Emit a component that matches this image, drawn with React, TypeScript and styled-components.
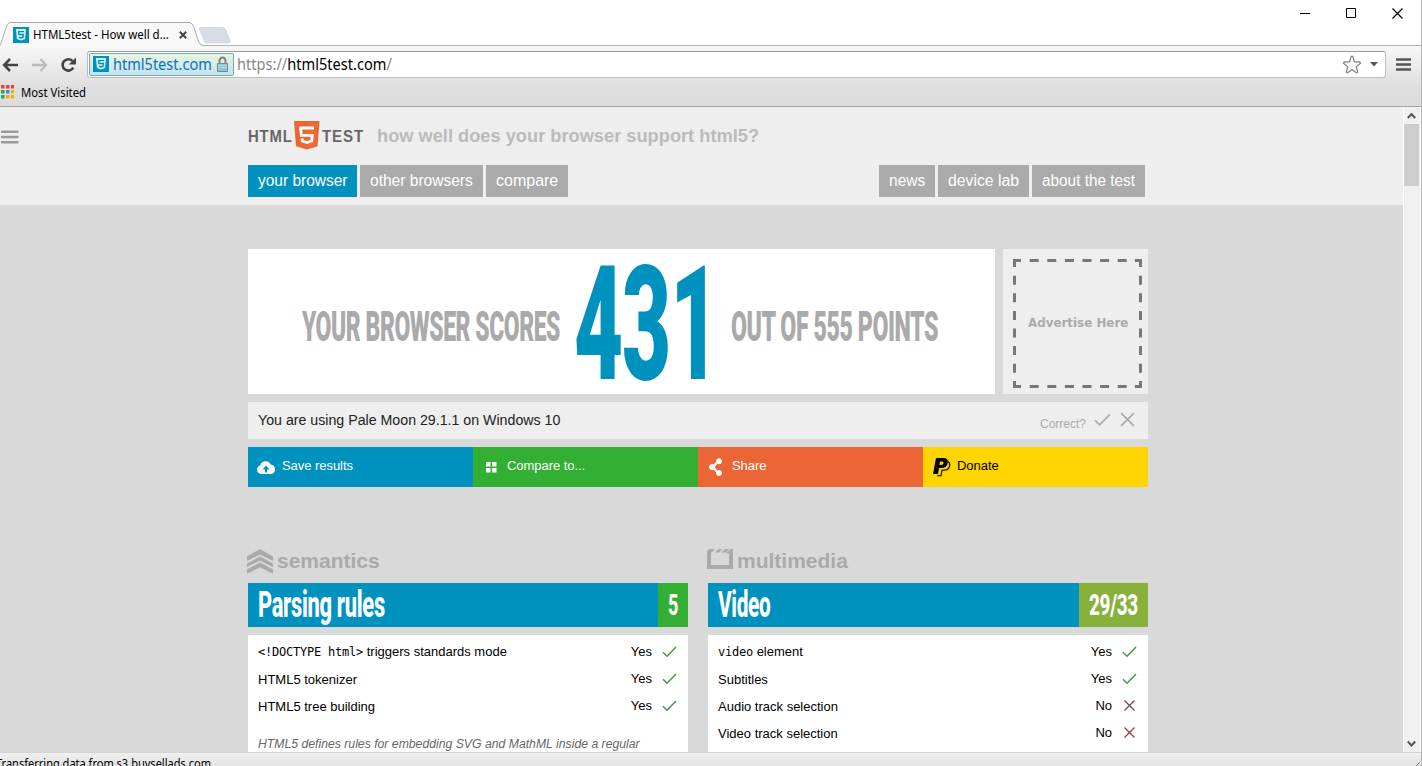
import React, { useLayoutEffect, useRef, useState } from "react";
import styled, { createGlobalStyle } from "styled-components";

const BLUE = "#0092bf";
const UI = '"Noto Sans", "Open Sans", sans-serif';
const SANS = '"Liberation Sans", Arial, sans-serif';
const DISPLAY = 'Roboto, "Liberation Sans", sans-serif';

const GlobalStyle = createGlobalStyle`
  * { box-sizing: border-box; }
  body { margin: 0; background: #fff; overflow: hidden; }
  svg { display: block; flex: none; }
`;

const FitBox = styled.span<{ $w: number }>`
  display: block;
  flex: none;
  width: ${(p) => p.$w}px;
  white-space: pre;
`;
const FitInner = styled.span`
  display: inline-block;
  transform-origin: 0 0;
`;

/* Squeezes a line of text horizontally until it fills the given width. */
function Fit({ w, children, className }: { w: number; children: React.ReactNode; className?: string }) {
  const ref = useRef<HTMLSpanElement>(null);
  const [scale, setScale] = useState(1);
  useLayoutEffect(() => {
    if (ref.current) setScale(w / ref.current.offsetWidth);
  }, [w]);
  return (
    <FitBox $w={w} className={className}>
      <FitInner ref={ref} style={{ transform: `scaleX(${scale})` }}>{children}</FitInner>
    </FitBox>
  );
}

/* ---------- window ---------- */
const Window = styled.div`
  width: 1422px;
  height: 766px;
  display: flex;
  flex-direction: column;
  overflow: hidden;
  font-family: ${SANS};
  border-right: 1px solid #b4b4b4;
  background: #fff;
`;
const TitleBar = styled.div`
  height: 46px;
  flex: none;
  display: flex;
  justify-content: space-between;
  border-bottom: 1px solid #b4b4b4;
`;
const Tabs = styled.div`
  position: relative;
  display: flex;
  width: 240px;
  height: 47px;
  padding: 22px 0 0 13px;
`;
const TabShape = styled.svg`
  position: absolute;
  left: 0;
  top: 22px;
`;
const TabContent = styled.div`
  position: relative;
  display: flex;
  align-items: center;
  height: 25px;
  font: 12px/25px ${UI};
  color: #000;
`;
const TabLabel = styled(Fit)`
  margin: 0 10px 0 4px;
`;
const Controls = styled.div`
  display: flex;
  align-items: center;
  gap: 35px;
  height: 26px;
  padding-right: 18px;
`;
const Toolbar = styled.div`
  height: 60px;
  flex: none;
  background: linear-gradient(#f7f7f7, #dedede 70%, #dcdcdc);
`;
const NavRow = styled.div`
  display: flex;
  align-items: center;
  height: 33px;
  padding: 4px 10px 0 2px;
`;
const NavIcons = styled.div`
  display: flex;
  align-items: center;
  gap: 12.5px;
  width: 85px;
`;
const AddressBar = styled.div`
  display: flex;
  align-items: center;
  width: 1299px;
  height: 27px;
  padding: 0 7px 0 1px;
  border: 1px solid #bdbdbd;
  border-top-color: #999;
  border-radius: 3px;
  background: #fff;
  font: 16px/23px ${UI};
`;
const Identity = styled.div`
  display: flex;
  align-items: center;
  width: 145px;
  height: 23px;
  padding-left: 3px;
  gap: 4px;
  border: 1px solid #72acba;
  border-radius: 2px;
  background: linear-gradient(#e6f4dc, #c3e4f1);
  color: #0f6fc0;
  > svg:first-child { margin-bottom: 2px; }
`;
const Url = styled.div`
  display: flex;
  flex: 1;
  margin-left: 3px;
  color: #888;
  b { font-weight: 400; color: #000; }
`;
const UrlIcons = styled.div`
  display: flex;
  align-items: center;
  gap: 8px;
`;
const MenuButton = styled.svg`
  margin-left: 10px;
`;
const Bookmarks = styled.div`
  display: flex;
  align-items: center;
  gap: 7px;
  height: 26px;
  font: 12px/26px ${UI};
`;
const BookmarkLabel = styled(Fit)`
  margin-top: 2px;
`;
const Viewport = styled.div`
  display: flex;
  flex: none;
  height: 646px;
  border-top: 1px solid #a5a5a5;
  overflow: hidden;
`;
const Page = styled.div`
  width: 1403px;
  height: 645px;
  background: #d9d9d9;
  overflow: hidden;
`;
const ScrollBar = styled.div`
  display: flex;
  flex-direction: column;
  align-items: center;
  width: 17px;
  padding: 6px 1px 5px 0;
  border-left: 1px solid #fff;
  background: #f0f0f0;
`;
const Thumb = styled.div`
  width: 15px;
  height: 62px;
  margin-top: 4px;
  margin-bottom: auto;
  background: #cdcdcd;
`;
const StatusBar = styled.div`
  display: flex;
  justify-content: space-between;
  height: 14px;
  flex: none;
  border-top: 1px solid #d4d4d4;
  background: linear-gradient(#f0f0f0, #e3e3e3);
  font: 12px/22px ${UI};
  overflow: hidden;
`;
const StatusText = styled(Fit)`
  margin-left: -4px;
`;
const Grip = styled.svg`
  margin-right: 1px;
`;

/* ---------- page header ---------- */
const Header = styled.header`
  display: flex;
  height: 98px;
  background: #eee;
`;
const Burger = styled.div`
  width: 248px;
  padding: 23px 0 0 1px;
`;
const HeaderMain = styled.div`
  width: 897px;
`;
const Brand = styled.div`
  display: flex;
  align-items: center;
  height: 58px;
`;
const Logo = styled.div`
  display: flex;
  align-items: center;
  width: 129px;
  font-size: 16.5px;
  font-weight: 700;
  color: #666;
  letter-spacing: 1px;
  svg { margin: 0 1px 2px 0; }
`;
const Slogan = styled.div`
  font-size: 18px;
  font-weight: 700;
  color: #bbb;
`;
const Nav = styled.nav`
  display: flex;
  gap: 3px;
`;
const NavItem = styled.a<{ $active?: boolean; $push?: boolean }>`
  height: 32px;
  padding: 0 10px;
  margin-left: ${(p) => (p.$push ? "auto" : "0")};
  background: ${(p) => (p.$active ? BLUE : "#aaa")};
  color: #fff;
  font-size: 16px;
  line-height: 32px;
`;

/* ---------- results ---------- */
const Content = styled.main`
  width: 900px;
  margin: 44px 0 0 248px;
`;
const TopRow = styled.div`
  display: flex;
  gap: 8px;
  height: 145px;
`;
const Banner = styled.div`
  display: flex;
  width: 747px;
  padding-left: 54px;
  background: #fff;
  color: #aaa;
  font-family: ${DISPLAY};
  font-weight: 900;
  font-size: 42px;
  line-height: 156px;
  letter-spacing: -0.8px;
`;
const BigScore = styled(Fit)`
  margin: 0 13px 0 14px;
  color: ${BLUE};
  font-size: 159px;
  line-height: 152px;
  letter-spacing: -2px;
`;
const Advert = styled.div`
  width: 145px;
  padding: 10px 6px 6px 10px;
  background: #eee;
`;
const AdvertFrame = styled.div`
  position: relative;
  width: 129px;
  height: 129px;
  display: flex;
  align-items: center;
  justify-content: center;
  padding-bottom: 2px;
  color: #aaa;
  font: 700 12px "DejaVu Sans", sans-serif;
  > svg { position: absolute; inset: 0; }
`;
const Agent = styled.div`
  display: flex;
  justify-content: space-between;
  height: 37px;
  margin: 8px 0;
  padding: 0 12px 0 10px;
  background: #eee;
  color: #222;
  font-size: 14px;
  line-height: 37px;
`;
const Feedback = styled.div`
  display: flex;
  color: #aaa;
  font-size: 12px;
  line-height: 44px;
  svg { margin: 9px 0 0 8px; }
`;
const Actions = styled.div`
  display: grid;
  grid-template-columns: repeat(4, 225px);
`;
const Action = styled.a<{ $bg: string; $fg?: string }>`
  display: flex;
  height: 40px;
  padding-left: 9px;
  background: ${(p) => p.$bg};
  color: ${(p) => p.$fg ?? "#fff"};
  font-size: 13px;
  line-height: 38px;
  letter-spacing: -0.05px;
  svg { margin: 11px 5px 0 0; }
`;
const Columns = styled.div`
  display: grid;
  grid-template-columns: 440px 440px;
  gap: 20px;
  margin-top: 59px;
`;
const Category = styled.h2`
  display: flex;
  height: 29px;
  margin: 0 0 8px -1px;
  gap: 4px;
  color: #aaa;
  font-size: 21px;
  line-height: 30px;
`;
const CardHead = styled.div`
  display: flex;
  justify-content: space-between;
  height: 44px;
  padding-left: 10px;
  background: ${BLUE};
  color: #fff;
  font-family: ${DISPLAY};
  font-size: 36px;
  font-weight: 800;
  line-height: 44px;
  letter-spacing: -0.5px;
`;
const Points = styled.div<{ $bg: string }>`
  padding: 0 10px;
  background: ${(p) => p.$bg};
  font-size: 29px;
`;
const Card = styled.div`
  height: 160px;
  margin-top: 8px;
  padding: 4px 10px;
  background: #fff;
`;
const Row = styled.div`
  display: flex;
  height: 27px;
  color: #000;
  font-size: 13px;
  line-height: 27px;
  white-space: pre;
  svg { margin: 5px 1px 0 10px; }
  &:first-child { line-height: 25px; }
`;
const RowLabel = styled.div`
  flex: 1;
  code { font: 12px/24px "DejaVu Sans Mono", monospace; letter-spacing: -0.22px; }
`;
const RowStatus = styled.div`
  line-height: 25px;
`;
const Note = styled.p`
  margin: 15px 0 0;
  color: #666;
  font-size: 12px;
  font-style: italic;
  line-height: 18px;
`;

/* ---------- drawings ---------- */
const Favicon = () => (
  <svg width="16" height="16" viewBox="0 0 16 16">
    <path fill={BLUE} d="M0 0h16v16H0z" />
    <path fill="#d5f0fa" d="M3 2h10l-.9 10L8 13.5 3.900 12z" />
    <path fill="none" stroke={BLUE} strokeWidth="1.400" d="M11 4.600H5.700L6 7.500h4.300L10 10.200l-2 .7-2-.7" />
  </svg>
);
const Shield = () => (
  <svg width="28" height="30" viewBox="0 0 28 30">
    <path fill="#eb6434" d="M1 1h25.500l-2 25.200L14 29.500 3 26.200z" />
    <path fill="#f06a35" d="M14 3h10.700l-2 21.500L14 27z" />
    <path fill="none" stroke="#fff" strokeWidth="2.800" d="M21 8H7.700l.6 7.300h11L18.700 21 14 22.500 9.300 21 9 18.300" />
  </svg>
);
const Check = ({ size = 15, color = "#3f9440", w = 1.400 }) => (
  <svg width={size} height={size} viewBox="0 0 15 15" fill="none" stroke={color} strokeWidth={w}>
    <path d="M1 8.200l4 4L14 3" />
  </svg>
);
const Cross = ({ size = 15, color = "#8c4048", w = 1.300, s = 2.500 }) => (
  <svg width={size} height={size} viewBox="0 0 15 15" stroke={color} strokeWidth={w}>
    <path d={`M${s} ${s}L${15 - s} ${15 - s}M${15 - s} ${s}L${s} ${15 - s}`} />
  </svg>
);
const dots = ["#ea4335", "#ea4335", "#ea4335", "#34a060", "#4285f4", "#fbaa00", "#34a060", "#fbaa00", "#fbaa00"];

type Result = { label: React.ReactNode; ok: boolean };
const ResultRow = ({ label, ok }: Result) => (
  <Row>
    <RowLabel>{label}</RowLabel>
    <RowStatus>{ok ? "Yes" : "No"}</RowStatus>
    {ok ? <Check /> : <Cross />}
  </Row>
);
const parsing: Result[] = [
  { label: <><code>{"<!DOCTYPE html>"}</code> triggers standards mode</>, ok: true },
  { label: "HTML5 tokenizer", ok: true },
  { label: "HTML5 tree building", ok: true },
];
const video: Result[] = [
  { label: <><code>video</code> element</>, ok: true },
  { label: "Subtitles", ok: true },
  { label: "Audio track selection", ok: false },
  { label: "Video track selection", ok: false },
];

export default function App() {
  return (
    <Window>
      <GlobalStyle />
      <TitleBar>
        <Tabs>
          <TabShape width="240" height="26" viewBox="0 0 240 26">
            <path fill="#f8f8f8" stroke="#aaa" d="M-2 26C3 22 5 1 10 .5H190C196 1 196 23.500 203 23.500V26H-1z" />
            <path fill="#f8f8f8" d="M0 24h204v2H0z" />
            <path fill="#d8dde5" stroke="#ccd0d6" strokeWidth=".7" d="M200 5.500h22q3 0 4 3l4 10q1 2.500-2 2.500h-21q-2 0-3-2.500l-4.500-11q-1-2 .5-2z" />
          </TabShape>
          <TabContent>
            <Favicon />
            <TabLabel w={136}>HTML5test - How well d...</TabLabel>
            <svg width="8" height="8" viewBox="0 0 8 8" stroke="#444" strokeWidth="2"><path d="M.8.8l6.400 6.400M7.200.8L.8 7.200" /></svg>
          </TabContent>
        </Tabs>
        <Controls>
          <svg width="11" height="11"><path d="M0 5h10v1H0z" /></svg>
          <svg width="11" height="11" fill="none" stroke="#000"><path d="M.5.5h9v9h-9z" /></svg>
          <svg width="11" height="11" stroke="#000" strokeWidth="1.200"><path d="M.5.5l10 10M10.500.5l-10 10" /></svg>
        </Controls>
      </TitleBar>
      <Toolbar>
        <NavRow>
          <NavIcons>
            <svg width="17" height="14" viewBox="0 0 17 14" fill="none" stroke="#444" strokeWidth="2.600"><path d="M2 7h14M8 1L2.200 7 8 13" /></svg>
            <svg width="16" height="14" viewBox="0 0 16 14" fill="none" stroke="#bbb" strokeWidth="2.300"><path d="M0 7h14M8.500 1l5.500 6-5.500 6" /></svg>
            <svg width="17" height="16" viewBox="0 0 17 16" fill="none" stroke="#444" strokeWidth="2.600"><path d="M12.500 4A5.700 5.700 0 1 0 13.300 10.700" /><path fill="#444" stroke="none" d="M16 .5v7H8.800z" /></svg>
          </NavIcons>
          <AddressBar>
            <Identity>
              <Favicon />
              <Fit w={99}>html5test.com</Fit>
              <svg width="13" height="17" viewBox="0 0 13 17">
                <path fill="none" stroke="#858585" strokeWidth="2" d="M3.500 8V5a3 3.500 0 0 1 6 0v3" />
                <path fill="#8dc5d5" stroke="#7b898d" d="M1.500 7.500h10v8h-10z" />
                <path stroke="#b9dfe7" d="M2 9.500h9M2 11.500h9" />
              </svg>
            </Identity>
            <Url><Fit w={155}>https://<b>html5test.com</b>/</Fit></Url>
            <UrlIcons>
              <svg width="20" height="19" viewBox="0 0 20 19" fill="#fff" stroke="#888" strokeWidth="1.300" strokeLinejoin="round"><path d="M10 1.200q.8 0 1 .9l1.400 4.700 5.400.2q1.300.4.400 1.400l-4 3.400 1.500 5q-.2 1.400-1.500.7L10 14.700l-4.200 2.800q-1.300.7-1.500-.7l1.500-5-4-3.400Q.9 7.400 2.200 7l5.400-.2L9 2.100q.2-.9 1-.9z" /></svg>
              <svg width="8" height="5"><path fill="#555" d="M0 0h8L4 4.500z" /></svg>
            </UrlIcons>
          </AddressBar>
          <MenuButton width="15" height="13" viewBox="0 0 15 13" stroke="#555" strokeWidth="2.600"><path d="M0 1.500h15M0 6.500h15M0 11.500h15" /></MenuButton>
        </NavRow>
        <Bookmarks>
          <svg width="14" height="14">
            {dots.map((c, i) => <rect key={i} x={1 + (i % 3) * 5} y={(i / 3 | 0) * 5} width="3.500" height="3.500" fill={c} />)}
          </svg>
          <BookmarkLabel w={65}>Most Visited</BookmarkLabel>
        </Bookmarks>
      </Toolbar>

      <Viewport>
        <Page>
          <Header>
            <Burger>
              <svg width="18" height="14" stroke="#999" strokeWidth="2.400"><path d="M0 1.700h17.500M0 7h17.500M0 12.300h17.500" /></svg>
            </Burger>
            <HeaderMain>
              <Brand>
                <Logo>
                  <Fit w={45}>HTML</Fit>
                  <Shield />
                  <Fit w={42}>TEST</Fit>
                </Logo>
                <Slogan><Fit w={382}>how well does your browser support html5?</Fit></Slogan>
              </Brand>
              <Nav>
                <NavItem $active><Fit w={89}>your browser</Fit></NavItem>
                <NavItem><Fit w={103}>other browsers</Fit></NavItem>
                <NavItem><Fit w={62}>compare</Fit></NavItem>
                <NavItem $push><Fit w={36}>news</Fit></NavItem>
                <NavItem><Fit w={71}>device lab</Fit></NavItem>
                <NavItem><Fit w={93}>about the test</Fit></NavItem>
              </Nav>
            </HeaderMain>
          </Header>

          <Content>
            <TopRow>
              <Banner>
                <Fit w={258}>YOUR BROWSER SCORES</Fit>
                <BigScore w={144}>431</BigScore>
                <Fit w={207}>OUT OF 555 POINTS</Fit>
              </Banner>
              <Advert>
                <AdvertFrame>
                  <svg width="129" height="129" fill="none" stroke="#777" strokeWidth="3">
                    <path strokeDasharray="8 8.700 9 8.600 9 8.600 9 8.600 9 8.600 9 8.600 9 8.200 8" d="M0 1.500h129M0 127.500h129M1.500 0v129M127.500 0v129" />
                  </svg>
                  <Fit w={100}>Advertise Here</Fit>
                </AdvertFrame>
              </Advert>
            </TopRow>
            <Agent>
              <Fit w={302}>You are using Pale Moon 29.1.1 on Windows 10</Fit>
              <Feedback>
                Correct?
                <Check size={17} color="#aaa" w={1.500} />
                <Cross size={17} color="#aaa" w={1.500} s={1.800} />
              </Feedback>
            </Agent>
            <Actions>
              <Action $bg={BLUE}>
                <svg width="20" height="18" viewBox="1 0 20 18">
                  <path fill="#fff" d="M5 16a4.400 4.400 0 0 1-.8-8.600A5.500 5.500 0 0 1 14.600 6.500 4.800 4.800 0 0 1 15 16z" />
                  <path fill={BLUE} d="M9 14.500v-3H6.500l3.500-4 3.500 4H11v3z" />
                </svg>
                Save results
              </Action>
              <Action $bg="#33b033">
                <svg width="20" height="18" fill="#fff"><path d="M4 4h4.500v4.500H4zM10 4h4.500v4.500H10zM4 10h4.500v4.500H4zM10 10h4.500v4.500H10z" /></svg>
                Compare to...
              </Action>
              <Action $bg="#eb6536">
                <svg width="20" height="18" viewBox="0 0 20 18" fill="#fff" stroke="#fff">
                  <path fill="none" strokeWidth="2.200" d="M11.500 3.500Q9 5 6 9q3 4 5.500 6" />
                  <circle cx="12" cy="3.300" r="2.500" /><circle cx="5" cy="9" r="2.500" /><circle cx="12" cy="15" r="2.500" />
                </svg>
                Share
              </Action>
              <Action $bg="#fed500" $fg="#000">
                <svg width="20" height="20" viewBox="0 0 20 20">
                  <path fill="none" stroke="#1e1e0b" strokeWidth="1.300" d="M16 3.500q2.400 1.500 1.400 5Q16.500 12 12.500 12.200l-2.500.2-1 5.300H5.300" />
                  <path fillRule="evenodd" d="M4 0h7.500q5 0 4.300 4.500Q15 10 9 10H7l-1 6H1zM8 3.500L7.400 7H9q2.500 0 2.600-2 .2-1.500-1.500-1.500z" />
                </svg>
                Donate
              </Action>
            </Actions>

            <Columns>
              <section>
                <Category>
                  <svg width="26" height="29" viewBox="0 0 26 29" fill="#aaa">
                    <path d="M0 10.500L13 3l13 7.500v4.600L13 8.500 0 15.100zM0 17.500l13-7 13 7v3.600l-13-6.500-13 6.500zM0 23.600l13-7 13 7v4.200l-13-6.600-13 6.600z" />
                  </svg>
                  <Fit w={103}>semantics</Fit>
                </Category>
                <CardHead>
                  <Fit w={127}>Parsing rules</Fit>
                  <Points $bg="#33b033"><Fit w={10}>5</Fit></Points>
                </CardHead>
                <Card>
                  {parsing.map((r, i) => <ResultRow key={i} {...r} />)}
                  <Note><Fit w={382}>HTML5 defines rules for embedding SVG and MathML inside a regular</Fit></Note>
                </Card>
              </section>
              <section>
                <Category>
                  <svg width="26" height="29" viewBox="0 0 26 29" fill="#aaa">
                    <path d="M0 5l2.500-2H8L4.500 6.500H4V19h18V7.500h-3L23.500 3H26v20H0zM8 6.500L11.500 3h4L12 6.500zM14.500 6.500L18 3h4.500L19 6.500z" />
                  </svg>
                  <Fit w={111}>multimedia</Fit>
                </Category>
                <CardHead>
                  <Fit w={52.5}>Video</Fit>
                  <Points $bg="#87b13a"><Fit w={49}>29/33</Fit></Points>
                </CardHead>
                <Card>
                  {video.map((r, i) => <ResultRow key={i} {...r} />)}
                </Card>
              </section>
            </Columns>
          </Content>
        </Page>
        <ScrollBar>
          <svg width="9" height="7" fill="none" stroke="#555" strokeWidth="2"><path d="M.8 5l3.700-4 3.700 4" /></svg>
          <Thumb />
          <svg width="9" height="7" fill="none" stroke="#555" strokeWidth="2"><path d="M.8 1.500l3.700 4 3.700-4" /></svg>
        </ScrollBar>
      </Viewport>
      <StatusBar>
        <StatusText w={215}>Transferring data from s3.buysellads.com</StatusText>
        <Grip width="4" height="13" stroke="#777"><path d="M0 13l4-4" /></Grip>
      </StatusBar>
    </Window>
  );
}
